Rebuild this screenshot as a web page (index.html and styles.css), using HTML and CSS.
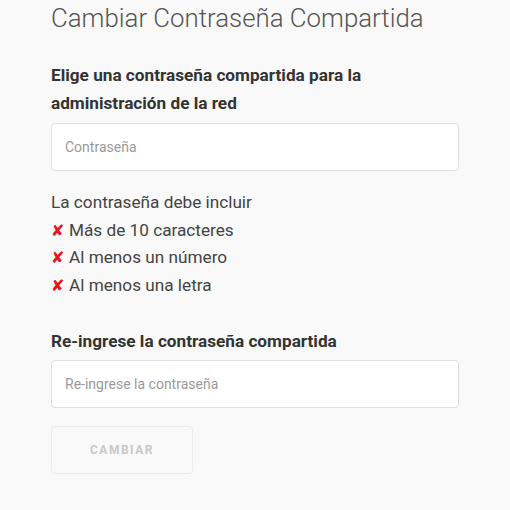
FILE: index.html
```html
<!DOCTYPE html>
<html lang="es">
<head>
    <meta charset="UTF-8">
    <meta name="viewport" content="width=device-width, initial-scale=1.0">
    <title>Cambiar Contraseña Compartida</title>
    <link rel="stylesheet" href="styles.css">
</head>
<body>
    <div class="container">
        <h1>Cambiar Contraseña Compartida</h1>

        <form id="passwordForm">
            <label class="field-label" for="password">Elige una contraseña compartida para la administración de la red</label>
            <input type="password" id="password" class="text-input" placeholder="Contraseña">

            <!-- Reglas de la contraseña -->
            <div class="rules">
                <p>La contraseña debe incluir</p>
                <ul>
                    <li><span class="mark">&#10008;</span>Más de 10 caracteres</li>
                    <li><span class="mark">&#10008;</span>Al menos un número</li>
                    <li><span class="mark">&#10008;</span>Al menos una letra</li>
                </ul>
            </div>

            <label class="field-label single" for="password2">Re-ingrese la contraseña compartida</label>
            <input type="password" id="password2" class="text-input" placeholder="Re-ingrese la contraseña">

            <button type="button" class="submit-btn" disabled>Cambiar</button>
        </form>
    </div>
</body>
</html>
```

FILE: styles.css
```css
/* General */
body {
    font-family: Roboto, 'Noto Sans', sans-serif;
    background-color: #f9f9f9;
    margin: 0;
    padding: 0;
    color: #333;
}

.container {
    width: 408px;
    padding-left: 51px;
}

h1 {
    margin: 0;
    font-size: 25.8px;
    line-height: 36px;
    font-weight: 300;
    color: #555;
}

.field-label {
    display: block;
    margin-top: 25px;
    font-size: 17.2px;
    line-height: 28px;
    font-weight: 700;
    color: #333;
    width: 340px;
}

.field-label.single {
    width: auto;
    margin-top: 28px;
}

.text-input {
    display: block;
    box-sizing: border-box;
    width: 100%;
    height: 48px;
    margin-top: 6px;
    padding: 0 13px;
    border: 1px solid #e0e0e0;
    border-radius: 4px;
    background: white;
    font-family: Roboto, sans-serif;
    font-size: 14px;
    outline: none;
}

.single + .text-input {
    margin-top: 5px;
}

.text-input::placeholder {
    color: #9a9a9a;
}

/* Reglas */
.rules {
    margin-top: 18px;
    font-size: 17.2px;
    line-height: 27.5px;
    color: #444;
}

.rules p {
    margin: 0;
}

.rules ul {
    list-style: none;
    margin: 0;
    padding: 0;
}

.rules li {
    height: 27.5px;
}

.mark {
    display: inline-block;
    width: 18px;
    line-height: 1;
    color: #e8141c;
    font-family: 'DejaVu Sans', sans-serif;
    font-size: 16px;
}

.submit-btn {
    display: block;
    margin-top: 18px;
    width: 142px;
    height: 48px;
    border: 1px solid #ececec;
    border-radius: 4px;
    background: transparent;
    color: #c8c8c8;
    font-family: Roboto, sans-serif;
    font-size: 12px;
    font-weight: 700;
    letter-spacing: 1.5px;
    text-transform: uppercase;
}
```
